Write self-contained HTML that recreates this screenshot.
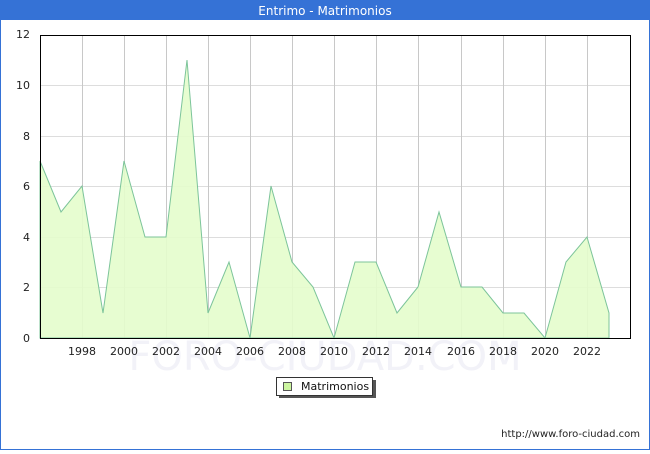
<!DOCTYPE html>
<html><head><meta charset="utf-8"><style>
body{margin:0;width:650px;height:450px;overflow:hidden;background:#fff;font-family:"DejaVu Sans","Liberation Sans",sans-serif}
</style></head><body>
<svg width="650" height="450" xmlns="http://www.w3.org/2000/svg" font-family="DejaVu Sans, Liberation Sans, sans-serif">
<rect x="0.5" y="0.5" width="649" height="449" fill="#fff" stroke="#3572d6" stroke-width="1"/>
<rect x="0" y="0" width="650" height="20" fill="#3572d6"/>
<text x="325" y="15" text-anchor="middle" font-size="12" fill="#fff">Entrimo - Matrimonios</text>
<text x="325" y="370" text-anchor="middle" font-size="40" fill="#f2f2f8">FORO-CIUDAD.COM</text>
<g stroke="#ddd" stroke-width="1">
<line x1="40" y1="85.5" x2="630" y2="85.5"/><line x1="40" y1="136.5" x2="630" y2="136.5"/><line x1="40" y1="186.5" x2="630" y2="186.5"/><line x1="40" y1="237.5" x2="630" y2="237.5"/><line x1="40" y1="287.5" x2="630" y2="287.5"/>
</g>
<g stroke="#c8c8c8" stroke-width="1">
<line x1="82.5" y1="35" x2="82.5" y2="338"/><line x1="124.5" y1="35" x2="124.5" y2="338"/><line x1="166.5" y1="35" x2="166.5" y2="338"/><line x1="208.5" y1="35" x2="208.5" y2="338"/><line x1="250.5" y1="35" x2="250.5" y2="338"/><line x1="292.5" y1="35" x2="292.5" y2="338"/><line x1="334.5" y1="35" x2="334.5" y2="338"/><line x1="376.5" y1="35" x2="376.5" y2="338"/><line x1="418.5" y1="35" x2="418.5" y2="338"/><line x1="461.5" y1="35" x2="461.5" y2="338"/><line x1="503.5" y1="35" x2="503.5" y2="338"/><line x1="545.5" y1="35" x2="545.5" y2="338"/><line x1="587.5" y1="35" x2="587.5" y2="338"/>
</g>
<polygon fill="#e4fdcc" fill-opacity="0.9" stroke="#7cc49a" stroke-width="1" points="40,338 40,161 61,212 82,186 103,313 124,161 145,237 166,237 187,60 208,313 229,262 250,338 271,186 292,262 313,287 334,338 355,262 376,262 397,313 418,287 439,212 461,287 482,287 503,313 524,313 545,338 566,262 587,237 609,313 609,338"/>
<rect x="40.5" y="35.5" width="590" height="303" fill="none" stroke="#000" stroke-width="1"/>
<g font-size="11" fill="#222" text-anchor="end">
<text x="30" y="38">12</text><text x="30" y="89">10</text><text x="30" y="140">8</text><text x="30" y="190">6</text><text x="30" y="241">4</text><text x="30" y="291">2</text><text x="30" y="342">0</text>
</g>
<g font-size="11" fill="#222" text-anchor="middle">
<text x="82" y="355">1998</text><text x="124" y="355">2000</text><text x="166" y="355">2002</text><text x="208" y="355">2004</text><text x="250" y="355">2006</text><text x="292" y="355">2008</text><text x="334" y="355">2010</text><text x="376" y="355">2012</text><text x="418" y="355">2014</text><text x="461" y="355">2016</text><text x="503" y="355">2018</text><text x="545" y="355">2020</text><text x="587" y="355">2022</text>
</g>
<rect x="279" y="380" width="97" height="18" fill="#555"/>
<rect x="276.5" y="377.5" width="96" height="18" fill="#fff" stroke="#333"/>
<rect x="283.5" y="382.5" width="8" height="8" fill="#ccf5a0" stroke="#555"/>
<text x="301" y="390" font-size="11" fill="#111">Matrimonios</text>
<text x="640" y="437" text-anchor="end" font-size="10" fill="#222">http://www.foro-ciudad.com</text>
</svg>
</body></html>
